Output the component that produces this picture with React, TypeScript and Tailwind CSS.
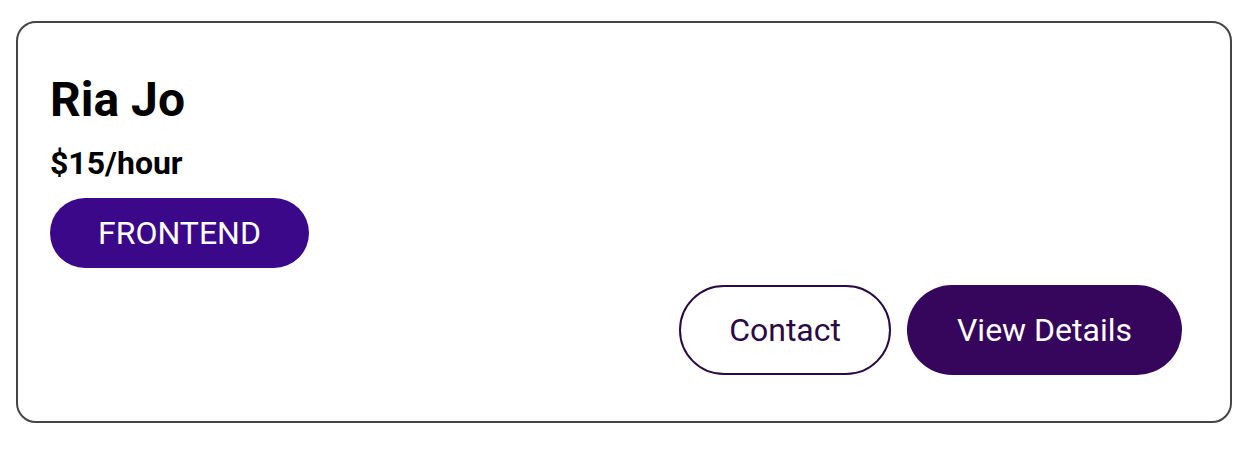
export default function App() {
  return (
    <div className="min-h-screen bg-white pt-[21px] pl-4 font-['Roboto',sans-serif]">
      <div className="w-[1216px] h-[402px] rounded-[20px] border-2 border-[#454545] pt-[53px] pl-8 pr-12 pb-[46px] flex flex-col">
        <h2 className="text-[48px] leading-[48px] font-bold text-black">Ria Jo</h2>
        <p className="mt-[23px] text-[32px] leading-[32px] font-bold text-black">$15/hour</p>
        <div className="mt-[19px]">
          <span className="inline-flex h-[70px] items-center rounded-full bg-[#3a0889] px-12 text-[32px] text-white">
            FRONTEND
          </span>
        </div>
        <div className="mt-[17px] flex justify-end gap-4">
          <button className="h-[90px] rounded-full border-2 border-[#2a0a45] bg-white px-[48px] text-[32px] text-[#2a0a45]">
            Contact
          </button>
          <button className="h-[90px] rounded-full bg-[#35065b] px-[50px] text-[32px] text-white">
            View Details
          </button>
        </div>
      </div>
    </div>
  );
}
